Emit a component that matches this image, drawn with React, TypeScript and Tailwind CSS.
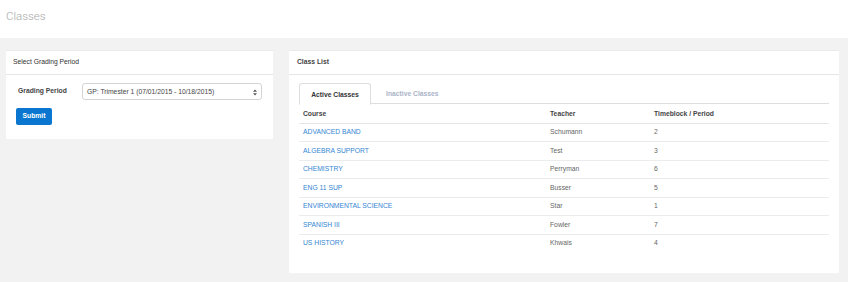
const classes = [
  { course: "ADVANCED BAND", teacher: "Schumann", period: "2" },
  { course: "ALGEBRA SUPPORT", teacher: "Test", period: "3" },
  { course: "CHEMISTRY", teacher: "Perryman", period: "6" },
  { course: "ENG 11 SUP", teacher: "Busser", period: "5" },
  { course: "ENVIRONMENTAL SCIENCE", teacher: "Star", period: "1" },
  { course: "SPANISH III", teacher: "Fowler", period: "7" },
  { course: "US HISTORY", teacher: "Khwais", period: "4" },
];

export default function App() {
  return (
    <div className="w-[848px] h-[282px] bg-[#f2f2f2] font-['Liberation_Sans',Arial,sans-serif] text-[6.75px] text-[#333]">
      <header className="h-[38px] bg-white flex items-center px-[6px]">
        <h1 className="font-['Roboto',sans-serif] font-light text-[11.5px] text-[#a8a8a8] pb-[4px]">Classes</h1>
      </header>

      <div className="flex items-start gap-[16px] pl-[6px] pt-[12px]">
        <section className="w-[267px] bg-white border-t border-[#e8eced]">
          <div className="h-[24px] flex items-center px-[7px] border-b border-[#e6e6e6]">
            Select Grading Period
          </div>
          <div className="px-[10px] pt-[8px] pb-[14px]">
            <div className="flex items-center">
              <label className="w-[66px] pl-[2px] font-bold text-[#444]">Grading Period</label>
              <div className="w-[180px] h-[17px] border border-[#d4d4d4] rounded-[3px] flex items-center justify-between pl-[4px] pr-[4px] pt-[1px] text-[#444]">
                <span>GP: Trimester 1 (07/01/2015 - 10/18/2015)</span>
                <svg width="4" height="7" viewBox="0 0 4 7">
                  <path d="M0 2.8 L2 0.4 L4 2.8 Z M0 4.2 L2 6.6 L4 4.2 Z" fill="#555" />
                </svg>
              </div>
            </div>
            <button className="mt-[8px] w-[36px] h-[17px] bg-[#0b76d0] rounded-[2px] text-white font-bold text-[6.75px] flex items-center justify-center">
              Submit
            </button>
          </div>
        </section>

        <section className="w-[550px] bg-white border-t border-[#e8eced]">
          <div className="h-[24px] flex items-center px-[8px] border-b border-[#e6e6e6] font-bold text-[#444]">
            Class List
          </div>
          <div className="px-[10px] pt-[8px] pb-[20px]">
            <div className="flex border-b border-[#dedede] h-[21px]">
              <div className="w-[72px] h-[22px] pt-[2px] border border-[#dedede] border-b-white rounded-t-[3px] bg-white flex items-center justify-center font-bold text-[#333]">
                Active Classes
              </div>
              <div className="px-[15px] pt-[2px] flex items-center font-bold text-[#a9b4c8]">Inactive Classes</div>
            </div>
            <table className="w-full border-collapse">
              <thead>
                <tr className="h-[19px] border-b border-[#e6e6e6] text-left font-bold text-[#444]">
                  <th className="w-[247px] pl-[4px] pt-[2px] font-bold">Course</th>
                  <th className="w-[104px] pl-[4px] pt-[2px] font-bold">Teacher</th>
                  <th className="pl-[4px] pt-[2px] font-bold">Timeblock / Period</th>
                </tr>
              </thead>
              <tbody>
                {classes.map((c, i) => (
                  <tr
                    key={c.course}
                    className={
                      i < classes.length - 1
                        ? "h-[18.5px] border-b border-[#ececec]"
                        : "h-[18.5px]"
                    }
                  >
                    <td className="pl-[4px] text-[#3486d3]">{c.course}</td>
                    <td className="pl-[4px] text-[#666]">{c.teacher}</td>
                    <td className="pl-[4px] text-[#666]">{c.period}</td>
                  </tr>
                ))}
              </tbody>
            </table>
          </div>
        </section>
      </div>
    </div>
  );
}
